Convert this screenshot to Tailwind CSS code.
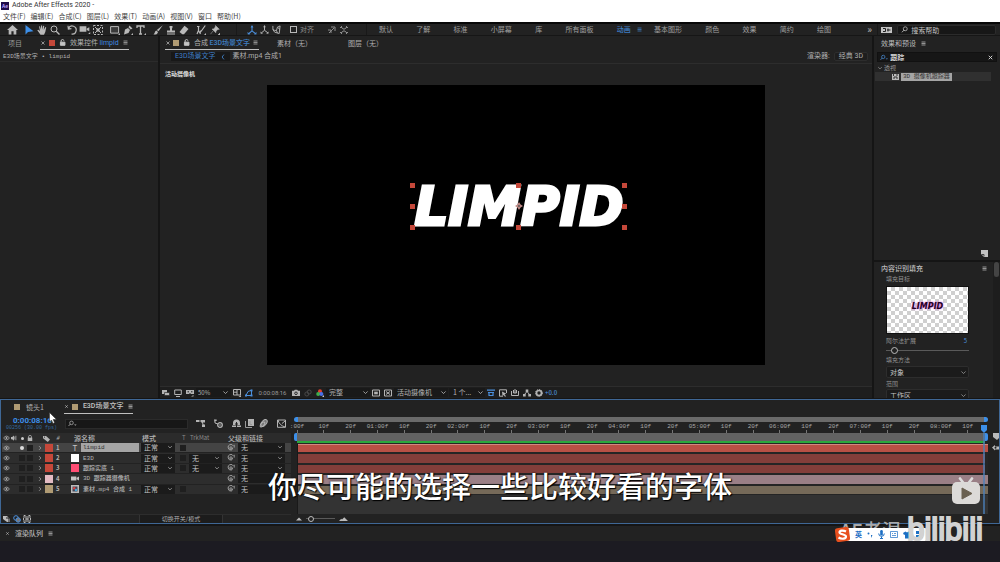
<!DOCTYPE html>
<html lang="zh-CN">
<head>
<meta charset="utf-8">
<title>Adobe After Effects 2020</title>
<meta name="viewport" content="width=device-width, initial-scale=1">
<script src="https://cdn.jsdelivr.net/npm/@tailwindcss/browser@4"></script>
</head>
<body class="bg-[#151515] text-[7px] leading-[9px] text-[#b0b0b0] font-['Noto_Sans_CJK_SC',sans-serif] overflow-hidden">

<svg class="hidden" aria-hidden="true">
  <defs>
    <symbol id="chev" viewBox="0 0 10 10"><path d="M2 3.5 5 6.5 8 3.5" fill="none" stroke="currentColor" stroke-width="1.2"/></symbol>
    <symbol id="right" viewBox="0 0 10 10"><path d="M3.5 2 6.5 5 3.5 8" fill="none" stroke="currentColor" stroke-width="1.2"/></symbol>
    <symbol id="x" viewBox="0 0 10 10"><path d="m2.5 2.5 5 5m0-5-5 5" fill="none" stroke="currentColor" stroke-width="1.3"/></symbol>
    <symbol id="menu" viewBox="0 0 10 10"><path d="M1 2h8M1 5h8M1 8h8" fill="none" stroke="currentColor" stroke-width="1.5"/></symbol>
    <symbol id="lock" viewBox="0 0 10 10"><path d="M2 4.5h6.5V9H2zM3 4.5V3a2 2 0 0 1 4-.5" fill="none" stroke="currentColor" stroke-width="1.4"/><path d="M2 4.5h6.5V9H2z" fill="currentColor"/></symbol>
    <symbol id="mag" viewBox="0 0 14 10"><circle cx="5.5" cy="4" r="2.8" fill="none" stroke="currentColor" stroke-width="1.2"/><path d="M3.5 6 .8 9" stroke="currentColor" stroke-width="1.3"/><path d="M9.5 6.5h4l-2 2z" fill="currentColor"/></symbol>
    <symbol id="eye" viewBox="0 0 12 10"><path d="M1 5q5-6.500 10 0-5 6.500-10 0z" fill="none" stroke="currentColor" stroke-width="1.300"/><circle cx="6" cy="4.800" r="1.700" fill="currentColor"/></symbol>
    <symbol id="spiral" viewBox="0 0 10 10"><path d="M6.500 5a1.500 1.500 0 1 1-1.500-1.500c2 0 2.500 3.500.5 4A3.500 3.500 0 1 1 8 2.500M9 1v3.500" fill="none" stroke="currentColor" stroke-width="1"/></symbol>
    <symbol id="cam" viewBox="0 0 12 10"><path d="M0 2h8v6H0zM8.500 4 12 2v6L8.500 6z" fill="currentColor"/></symbol>
    <symbol id="axis" viewBox="0 0 12 12"><path d="M6 1.500V7L2 10.500M6 7l4.500 3.500" fill="none" stroke="currentColor" stroke-width="1.300"/><path d="M4.300 3 6 0l1.700 3zM.5 8.500 1 11.500l3-.3zM11.500 8.500l-.3 3-3-.3z" fill="currentColor"/></symbol>
  </defs>
</svg>

<div class="flex min-h-screen flex-col">

  <header class="bg-white text-[#333]">
    <div class="flex h-[11px] items-center gap-[3px] pl-px">
      <span class="flex size-2 items-center justify-center bg-[#1d0a4a] text-[5px] leading-none font-bold text-[#b9a0ff]">Ae</span>
      <h1 class="text-[7px] font-['Roboto',sans-serif]">Adobe After Effects 2020 -</h1>
    </div>
    <nav class="flex h-[11px] items-center gap-[5px] pl-[3px] text-[7px] text-[#444]">
      <button>文件(F)</button><button>编辑(E)</button><button>合成(C)</button><button>图层(L)</button><button>效果(T)</button><button>动画(A)</button><button>视图(V)</button><button>窗口</button><button>帮助(H)</button>
    </nav>
  </header>

  <!-- tools and workspaces -->
  <div class="flex h-[14px] items-center border-t-2 border-b border-t-[#080808] border-b-[#161616] bg-[#222] text-[#b9b9b9]">
    <div class="flex w-[22px] justify-end pr-1"><button aria-label="主页"><svg class="h-[10px] w-[11px]" viewBox="0 0 12 11"><path d="M6 0 0 5.500h1.800V10.500h3V7h2.400v3.500h3V5.500H12z" fill="currentColor"/></svg></button></div>
    <div class="flex items-center gap-1">
      <div class="flex *:flex *:w-[13px] *:justify-center">
        <button aria-label="选取" class="text-[#3d8fe8]"><svg class="size-[10px]" viewBox="0 0 10 10"><path d="M1.500 0v9.500L4 7l5.500-.8z" fill="currentColor"/></svg></button>
        <button aria-label="手形"><svg class="size-[10px]" viewBox="0 0 10 10"><path d="M3.500 9.800 .3 5.300l1-.6L3 6 2 1.600l1-.3L4 4.500V.4h1.100v4L6.200.8l1 .2L6.800 5l1.500-3 .9.500L8.300 7 7 9.800z" fill="currentColor"/></svg></button>
        <button aria-label="缩放"><svg class="size-[10px]" viewBox="0 0 10 10"><circle cx="4" cy="4" r="3" fill="none" stroke="currentColor"/><path d="m6.200 6.200 3.300 3.300" stroke="currentColor" stroke-width="1.300"/></svg></button>
      </div>
      <div class="flex *:flex *:w-[13px] *:justify-center">
        <button aria-label="旋转"><svg class="size-[10px]" viewBox="0 0 10 10"><path d="M1.500 3.500a4 4 0 1 1 3 5.500M1 .8l.4 3.200 3-.3" fill="none" stroke="currentColor" stroke-width="1.200"/></svg></button>
        <button aria-label="摄像机"><svg class="h-[9px] w-[12px]" viewBox="0 0 12 10"><path d="M0 1.500h7.500v6H0zM8 4l2.800-1.600v4.500L8 5.500zM9.500 10h2.300V7.700z" fill="currentColor"/></svg></button>
        <button aria-label="锚点"><svg class="size-[10px]" viewBox="0 0 10 10"><path d="M.5.5h9v9h-9z" fill="none" stroke="currentColor" stroke-dasharray="2 1.500"/><path d="m2 2 6 6M8 2 2 8" stroke="currentColor"/><circle cx="5" cy="5" r="1.700" fill="currentColor"/></svg></button>
      </div>
      <div class="flex *:flex *:w-[13px] *:justify-center">
        <button aria-label="矩形"><svg class="size-[10px]" viewBox="0 0 10 10"><path d="M.6 1.600h8v6.500h-8z" fill="#3a3a3a" stroke="currentColor"/><path d="M8 10h2V8z" fill="currentColor"/></svg></button>
        <button aria-label="钢笔"><svg class="size-[10px]" viewBox="0 0 10 10"><path d="M1 9.500 2 4.500 5 3l2 2-1.500 3zM5.500 2.300 6.500.5 9.500 3.500 7.700 4.500zM8 10h2V8z" fill="currentColor"/></svg></button>
        <button aria-label="文字"><svg class="size-[10px]" viewBox="0 0 10 10"><path d="M1 3V1h7v2M4.500 1v8M3 9h3" fill="none" stroke="currentColor" stroke-width="1.300"/><path d="M8 10h2V8z" fill="currentColor"/></svg></button>
      </div>
      <div class="flex *:flex *:w-[13px] *:justify-center">
        <button aria-label="画笔"><svg class="size-[10px]" viewBox="0 0 10 10"><path d="M9.800.2 5.500 6.300 3.800 4.900zM3.300 5.400l1.700 1.500C4.500 9.500 2 9.800.5 9.500 2 8.500 1.500 6 3.300 5.400z" fill="currentColor"/></svg></button>
        <button aria-label="图章"><svg class="size-[10px]" viewBox="0 0 10 10"><path d="M3.500 1h3v1.500L6 3.500v2h3v2H1v-2h3v-2l-.5-1zM1 8.500h8v1H1z" fill="currentColor"/></svg></button>
        <button aria-label="橡皮擦"><svg class="size-[10px]" viewBox="0 0 10 10"><path d="M5.500.7 9.500 4 5 9.300H3.300L.5 7z" fill="currentColor"/></svg></button>
      </div>
      <div class="flex *:flex *:w-[14px] *:justify-center">
        <button aria-label="Roto 笔刷"><svg class="size-[10px]" viewBox="0 0 10 10"><path d="M1 1.500h2.500M2.500 1v4.500L1 9M2.500 5.500 4.500 9M9.300.5 5 6.500M5 5.500 4 8" fill="none" stroke="currentColor" stroke-width="1.200"/><path d="M8 10h2V8z" fill="currentColor"/></svg></button>
        <button aria-label="人偶图钉"><svg class="size-[10px]" viewBox="0 0 10 10"><path d="m5.500.5 3.800 3.800-1.500.2L6 6.200l-.2 1.600L2 4l1.700-.1L5.300 2zM3.200 5.800.5 9.200M8 10h2V8z" fill="currentColor" stroke="currentColor" stroke-width=".5"/></svg></button>
      </div>
    </div>
    <div class="ml-[14px] flex h-full items-center border-l border-[#191919] pl-[9px] *:flex *:w-3 *:justify-center">
      <button aria-label="本地轴" class="text-[#4b8fdc]"><svg class="size-[10px]"><use href="#axis"/></svg></button>
      <button aria-label="世界轴"><svg class="size-[9px]"><use href="#axis"/></svg></button>
      <button aria-label="视图轴"><svg class="size-[9px]" viewBox="0 0 10 10"><path d="M1 1v4l2 3 5 1.500L9 1 6 2.500 5 6H3L1 5M5 6l1 3M6 2.500 9 5" fill="none" stroke="currentColor"/></svg></button>
    </div>
    <label class="ml-2 flex items-center gap-[3px] text-[#8d8d8d]"><input type="checkbox" class="size-[7px] appearance-none border border-[#b9b9b9]">对齐</label>
    <div class="ml-[14px] flex gap-1 text-[#8d8d8d]">
      <button aria-label="对齐边缘"><svg class="size-2" viewBox="0 0 8 8"><path d="m1 7 5-5M3 1h4v4M0 4h3v3" fill="none" stroke="currentColor"/></svg></button>
      <button aria-label="对齐角"><svg class="size-2" viewBox="0 0 8 8"><path d="M0 1.500h2L3 3H5L6 1.500h2M0 6.500h2L3 5H5l1 1.500h2M1.500 0v2M6.500 0v2M1.500 6v2M6.500 6v2" fill="none" stroke="currentColor"/></svg></button>
    </div>
    <nav class="ml-[18px] flex h-full flex-1 items-center justify-between border-l border-[#191919] pl-3 text-[#a0a0a0]">
      <button>默认</button><button>了解</button><button>标准</button><button>小屏幕</button><button>库</button><button>所有面板</button>
      <button class="-mr-[11px] flex items-center gap-[6px] font-medium text-[#3f7fc4]">动画<svg class="size-[5px]"><use href="#menu"/></svg></button>
      <button>基本图形</button><button>颜色</button><button>效果</button><button>简约</button><button>绘图</button>
    </nav>
    <button aria-label="更多工作区" class="ml-9 pb-[2px] text-[10px] leading-[8px]">»</button>
    <div class="ml-[5px] flex h-full w-[123px] items-center gap-[5px] border-l border-[#191919] pr-1 pl-[3px]">
      <button aria-label="参考面板"><svg class="h-[6px] w-[11px]" viewBox="0 0 11 6"><path d="M0 0h11v6H0z" fill="#c4c4c4"/><path d="M2 1.500h2.500v3H2M6 3h3.500M7 1.500v3" fill="none" stroke="#222"/></svg></button>
      <label class="flex h-[10px] flex-1 items-center gap-[3px] rounded-xs border border-[#2b2b2b] bg-[#171717] pl-[3px]">
        <svg class="h-[7px] w-2" viewBox="0 0 9 10"><circle cx="5.500" cy="4" r="2.800" fill="none" stroke="currentColor" stroke-width="1.200"/><path d="M3.500 6 .8 9" stroke="currentColor" stroke-width="1.300"/></svg>
        <input type="text" aria-label="搜索帮助" placeholder="搜索帮助" class="w-full min-w-0 bg-transparent text-[7px] leading-[8px] outline-none placeholder:text-[#c4c4c4]">
      </label>
    </div>
  </div>

  <main class="flex flex-1 gap-[2px] pb-px">

    <!-- effect controls -->
    <section class="w-[158px] bg-[#222]">
      <div class="flex h-[14px]">
        <button class="pl-2 pr-[18px] text-[#9a9a9a]">项目</button>
        <div class="flex items-center border-b border-[#c0c0c0] pr-px">
          <button aria-label="关闭"><svg class="size-[6px]"><use href="#x"/></svg></button>
          <span class="ml-[3px] size-[6px] bg-[#c5483a]"></span>
          <svg class="ml-1 size-[7px] text-[#c4c4c4]"><use href="#lock"/></svg>
          <span class="ml-1">效果控件 <span class="text-[#3f8be0] font-['Roboto',sans-serif]">limpid</span></span>
          <button aria-label="菜单" class="ml-1"><svg class="size-[5px]"><use href="#menu"/></svg></button>
        </div>
      </div>
      <p class="border-b border-[#2b2b2b] pt-[2px] pl-[3px] text-[6px] font-['Liberation_Mono','Noto_Sans_CJK_SC',monospace]">E3D场景文字 • limpid</p>
    </section>

    <!-- composition viewer -->
    <section class="flex min-w-0 flex-1 flex-col bg-[#222]">
      <div class="flex h-[14px] pl-[5px]">
        <div class="flex items-center border-b border-[#c0c0c0] pr-px">
          <button aria-label="关闭"><svg class="size-[6px]"><use href="#x"/></svg></button>
          <span class="ml-[2px] size-[6px] bg-[#b09b74]"></span>
          <svg class="ml-1 size-[7px] text-[#c4c4c4]"><use href="#lock"/></svg>
          <span class="ml-1">合成 <span class="font-medium text-[#3f7fc4] font-['Roboto','Noto_Sans_CJK_SC',sans-serif]">E3D场景文字</span></span>
          <button aria-label="菜单" class="ml-[3px]"><svg class="size-[5px]"><use href="#menu"/></svg></button>
        </div>
        <button class="ml-[18px]">素材（无）</button>
        <button class="ml-9">图层（无）</button>
      </div>
      <div class="flex h-[14px] items-center border-b border-[#2d2d2d] px-1 font-['Roboto','Noto_Sans_CJK_SC',sans-serif]">
        <button class="ml-[7px] flex h-[9px] items-center gap-1 bg-[#181818] px-1 text-[#3f7fc4]">E3D场景文字<svg class="size-[6px]" viewBox="0 0 10 10"><path d="M6.500 1 3.500 5l3 4" fill="none" stroke="currentColor" stroke-width="1.500"/></svg></button>
        <button class="ml-[3px]">素材.mp4 合成1</button>
        <span class="ml-auto">渲染器:</span>
        <button class="ml-1 h-[9px] rounded-xs border border-[#2d2d2d] bg-[#1e1e1e] px-1 leading-[7px]">经典 3D</button>
      </div>

      <div class="relative flex flex-1 items-center justify-center">
        <span class="absolute top-[5px] left-[5px] text-[6px] font-black text-[#d0d0d0]">活动摄像机</span>
        <div class="flex aspect-video w-[70%] items-center justify-center bg-black pb-[38px] pl-[6px]">
          <div class="relative flex h-[43px] w-[213px] items-center justify-center">
            <span class="pt-px text-[53px] leading-none font-bold whitespace-nowrap text-white italic [-webkit-text-stroke:3px_#fff] font-['DejaVu_Sans',sans-serif]">LIMPID</span>
            <div class="absolute -inset-[2px] grid grid-cols-3 content-between justify-items-center *:size-[5px] *:bg-[#c5483a]">
              <i class="justify-self-start"></i><i></i><i class="justify-self-end"></i>
              <i class="my-[16px] justify-self-start"></i><svg class="my-[14px] size-2! bg-transparent!" viewBox="0 0 10 10"><path d="M5 0 7 3l3 2-3 2-2 3-2-3-3-2 3-2z" fill="#c08a86"/><circle cx="5" cy="5" r="1.200" fill="#555"/></svg><i class="my-[16px] justify-self-end"></i>
              <i class="justify-self-start"></i><i></i><i class="justify-self-end"></i>
            </div>
          </div>
        </div>
      </div>

      <div class="flex h-[12px] items-center border-t border-[#2d2d2d] bg-[#1e1e1e] text-[#b4b4b4]">
        <div class="flex *:flex *:w-3 *:justify-center">
          <button aria-label="始终预览"><svg class="size-2" viewBox="0 0 8 8"><path d="M0 1h5v4H0z" fill="currentColor"/><path d="M2.500 3.500h5v3h-5z" fill="currentColor" stroke="#1e1e1e" stroke-width=".6"/></svg></button>
          <button aria-label="主查看器"><svg class="size-2" viewBox="0 0 8 8"><path d="M.7 1h6.600v4.500H.7zM2 7.500h4" fill="none" stroke="currentColor"/></svg></button>
          <button aria-label="VR"><svg class="size-2" viewBox="0 0 8 8"><path d="M0 1h8v4H5L4 4 3 5H0zM5 7.500h2.500V6z" fill="currentColor"/><path d="M1.500 2.800h1.500M5 2.800h1.500" stroke="#1e1e1e"/></svg></button>
        </div>
        <div class="relative w-[35px]"><select aria-label="放大率" class="block h-[9px] w-full appearance-none bg-[#191919] pl-[2px] text-[6px] leading-[9px]"><option>50%</option></select><svg class="pointer-events-none absolute top-[1px] right-[2px] size-[7px]"><use href="#chev"/></svg></div>
        <div class="flex *:flex *:w-3 *:justify-center">
          <button aria-label="网格"><svg class="size-2" viewBox="0 0 8 8"><path d="M.5.500h7v5.500h-7zM4 .5V6M.5 3.200H4" fill="none" stroke="currentColor"/><path d="M5.500 8H8V6z" fill="currentColor"/></svg></button>
          <button aria-label="蒙版" class="text-[#4b8fdc]"><svg class="size-2" viewBox="0 0 8 8"><path d="M1 6.500h5.500V1.200L3 2.500z" fill="none" stroke="currentColor"/><path d="M0 5.500h2v2H0zM5.500 5.500h2v2h-2zM5.500.5h2v2h-2z" fill="currentColor"/></svg></button>
        </div>
        <button class="w-[35px] text-center text-[6px] text-[#9a9a9a] font-['Roboto',sans-serif]">0:00:08:16</button>
        <div class="flex *:flex *:w-3 *:justify-center">
          <button aria-label="拍摄快照"><svg class="size-2" viewBox="0 0 8 8"><path d="M0 1.800h2L2.800.8h2.400l.8 1h2V7H0z" fill="currentColor"/><circle cx="4" cy="4.300" r="1.300" fill="none" stroke="#1e1e1e" stroke-width=".9"/></svg></button>
          <button aria-label="显示快照" class="text-[#484848]"><svg class="size-2" viewBox="0 0 8 8"><circle cx="2.800" cy="5" r="2" fill="none" stroke="currentColor"/><circle cx="5.200" cy="3" r="2" fill="none" stroke="currentColor"/></svg></button>
          <button aria-label="通道"><svg class="size-2" viewBox="0 0 8 8"><circle cx="4" cy="2.200" r="2" fill="#e0402e"/><circle cx="2.200" cy="5" r="2" fill="#3fae48"/><circle cx="5.400" cy="5" r="2" fill="#4a6fe8"/><path d="M6 8h2V6z" fill="#ccc"/></svg></button>
        </div>
        <div class="relative w-[44px]"><select aria-label="分辨率" class="block h-[9px] w-full appearance-none bg-[#191919] pl-[3px] text-[7px] leading-[9px]"><option>完整</option></select><svg class="pointer-events-none absolute top-[1px] right-[1px] size-[7px]"><use href="#chev"/></svg></div>
        <div class="flex *:flex *:w-3 *:justify-center">
          <button aria-label="目标区域"><svg class="size-2" viewBox="0 0 8 8"><path d="M.5 1h7v6h-7z" fill="none" stroke="currentColor"/><path d="M2.200 2.700h3.600v2.600H2.200z" fill="currentColor"/></svg></button>
          <button aria-label="透明网格"><svg class="size-2" viewBox="0 0 8 8"><path d="M.5 1h7v6h-7zM2 2.500l4 3M6 2.500l-4 3" fill="none" stroke="currentColor"/></svg></button>
        </div>
        <div class="relative w-[54px]"><select aria-label="3D 视图" class="block h-[9px] w-full appearance-none bg-[#191919] pl-[3px] text-[7px] leading-[9px]"><option>活动摄像机</option></select><svg class="pointer-events-none absolute top-[1px] right-[1px] size-[7px]"><use href="#chev"/></svg></div>
        <div class="relative ml-px w-9"><select aria-label="视图布局" class="block h-[9px] w-full appearance-none bg-[#191919] pl-1 text-[7px] leading-[9px]"><option>1 个...</option></select><svg class="pointer-events-none absolute top-[1px] right-[1px] size-[7px]"><use href="#chev"/></svg></div>
        <div class="flex *:flex *:w-3 *:justify-center">
          <button aria-label="像素长宽比" class="text-[#4b8fdc]"><svg class="size-2" viewBox="0 0 8 8"><path d="M0 1.200h8M1 3.500h6M2 3.500v3h4v-3" fill="none" stroke="currentColor" stroke-width="1.200"/></svg></button>
          <button aria-label="快速预览"><svg class="size-2" viewBox="0 0 8 8"><path d="M7.500 4V.8h-7v6.400H4" fill="none" stroke="currentColor"/><path d="m3 2.500 4.500 2.200-2 .5 1.500 2-1 .6L4.700 6 3.500 7z" fill="currentColor"/></svg></button>
          <button aria-label="时间轴"><svg class="size-2" viewBox="0 0 8 8"><path d="M.5 2v4.500h7V2M4 0v4M2.500 1v3h3V1" fill="none" stroke="currentColor"/></svg></button>
          <button aria-label="流程图"><svg class="size-2" viewBox="0 0 8 8"><path d="M2.700.500h2.600V3H2.700zM0 5h2.700v2.500H0zM5.300 5H8v2.500H5.300z" fill="currentColor"/><path d="m4 2.500-2.500 3M4 2.500l2.500 3" stroke="currentColor"/></svg></button>
          <button aria-label="曝光度"><svg class="size-2" viewBox="0 0 8 8"><circle cx="4" cy="4" r="2.500" fill="none" stroke="currentColor" stroke-width="1.600"/><circle cx="4" cy="4" r="3.500" fill="none" stroke="currentColor" stroke-dasharray="1.300 1"/></svg></button>
        </div>
        <button class="text-[6px] font-medium text-[#4b8fdc]">+0.0</button>
      </div>
    </section>

    <!-- effects and fill panels -->
    <aside class="flex w-[126px] flex-col gap-[2px]">
      <section class="flex flex-1 flex-col bg-[#222]">
        <h2 class="flex h-[14px] items-center gap-[5px] pl-[7px] text-[#bbb]">效果和预设 <svg class="size-[5px]"><use href="#menu"/></svg></h2>
        <label class="mx-[3px] mt-[2px] flex h-[10px] items-center gap-[2px] border border-[#111] bg-[#161616] px-[2px]">
          <svg class="h-[7px] w-[10px] text-[#4b8fdc]"><use href="#mag"/></svg>
          <input type="text" aria-label="搜索效果" value="跟踪" class="w-full min-w-0 bg-transparent text-[7px] leading-[8px] font-bold text-[#d0d0d0] outline-none">
          <button aria-label="清除" class="text-[#ddd]"><svg class="size-[7px]"><use href="#x"/></svg></button>
        </label>
        <ul class="pt-px pr-[9px] pl-px text-[6px] text-[#9a9a9a]">
          <li class="flex h-[9px] items-center gap-px pl-[2px]"><svg class="size-[6px]"><use href="#chev"/></svg>透视</li>
          <li class="flex h-[9px] items-center gap-[2px] bg-[#303030] pl-[17px]">
            <svg class="h-2 w-[7px]" viewBox="0 0 7 8"><path d="M0 1h7v6H0z" fill="#bbb"/><path d="M1.500 0v3M5 0v3M2 6V4h3v2" fill="none" stroke="#333"/></svg>
            <span class="h-2 bg-[#a5a5a5] px-[2px] leading-[8px] text-[#333] font-['Liberation_Mono','Noto_Sans_CJK_SC',monospace]">3D 摄像机跟踪器</span>
          </li>
        </ul>
        <button aria-label="新建" class="mt-auto mr-[12px] mb-[3px] self-end"><svg class="size-[7px]" viewBox="0 0 7 7"><path d="M0 0h7v7H3L0 4z" fill="#c4c4c4"/><path d="M.5 4.500H3V6.500" stroke="#444" fill="none"/></svg></button>
      </section>
      <section class="flex h-[136px] overflow-hidden bg-[#222]">
        <div class="min-w-0 flex-1">
          <h2 class="flex h-[13px] items-center justify-between pr-[6px] pl-[7px] font-medium text-[#bbb]">内容识别填充 <svg class="size-[5px]"><use href="#menu"/></svg></h2>
          <div class="pr-[24px] pl-3 text-[6px] leading-[8px] text-[#929292]">
            <p>填充目标</p>
            <div class="mt-[3px] flex h-[48px] items-center justify-center border border-[#111] bg-[repeating-conic-gradient(#cfcfcf_0_25%,#fff_0_50%)] bg-[length:8px_8px] pb-[6px] text-[8px] font-bold text-[#230624] italic text-shadow-[0_0_2px_#e040e0] font-['DejaVu_Sans',sans-serif]"><span>LIMPID</span></div>
            <div class="mt-[3px] flex justify-between pr-[2px]"><label for="alpha">阿尔法扩展</label><span class="text-[#4b8fdc]">5</span></div>
            <input id="alpha" type="range" min="0" max="100" value="7" class="mt-px block h-2 w-full appearance-none bg-transparent bg-[linear-gradient(#5a5a5a,#5a5a5a)] bg-[length:100%_1px] bg-center bg-no-repeat [&::-webkit-slider-thumb]:size-[7px] [&::-webkit-slider-thumb]:appearance-none [&::-webkit-slider-thumb]:rounded-full [&::-webkit-slider-thumb]:border [&::-webkit-slider-thumb]:border-[#bbb] [&::-webkit-slider-thumb]:bg-[#222]">
            <label for="method" class="mt-[2px] block">填充方法</label>
            <div class="relative mt-[2px]"><select id="method" class="block h-3 w-full appearance-none rounded-xs border border-[#2d2d2d] bg-[#1b1b1b] pl-[3px] text-[7px] leading-[10px] text-[#c4c4c4]"><option>对象</option></select><svg class="pointer-events-none absolute top-[3px] right-[2px] size-[7px]"><use href="#chev"/></svg></div>
            <label for="range" class="mt-[2px] block">范围</label>
            <div class="relative mt-px"><select id="range" class="block h-3 w-full appearance-none rounded-xs border border-[#2d2d2d] bg-[#1b1b1b] pl-[3px] text-[7px] leading-[10px] text-[#c4c4c4]"><option>工作区</option></select><svg class="pointer-events-none absolute top-[3px] right-[2px] size-[7px]"><use href="#chev"/></svg></div>
          </div>
        </div>
        <div class="w-[7px] bg-[#1d1d1d] px-px"><div class="h-[15px] rounded-full bg-[#444]"></div></div>
      </section>
    </aside>
  </main>

  <!-- timeline -->
  <section class="relative flex h-[125px] border border-[#3f6795] bg-[#222]">
    <div class="flex w-[290px] flex-col pl-px">
      <div class="flex h-[14px] items-start">
        <button class="flex h-[14px] items-center gap-[6px] pl-3"><i class="size-[6px] bg-[#b09b74]"></i>镜头1</button>
        <div class="ml-5 flex h-[14px] items-center border-b border-[#c0c0c0] text-[#c4c4c4]">
          <button aria-label="关闭"><svg class="size-[5px]"><use href="#x"/></svg></button>
          <i class="ml-[3px] size-[6px] bg-[#b09b74]"></i>
          <span class="ml-[5px] font-medium font-['Roboto','Noto_Sans_CJK_SC',sans-serif]">E3D场景文字</span>
          <button aria-label="菜单" class="ml-[5px]"><svg class="size-[5px]"><use href="#menu"/></svg></button>
        </div>
      </div>
      <div class="flex h-[19px] items-center">
        <div class="w-[63px] pl-1 leading-none">
          <button class="block pl-[7px] text-[8px] leading-[9px] font-bold text-[#3d8fe8] font-['Roboto',sans-serif]">0:00:08:16</button>
          <span class="block text-[5px] leading-[6px] whitespace-nowrap text-[#34689f] font-['Liberation_Mono',monospace]">00256 (30.00 fps)</span>
        </div>
        <label class="flex h-[10px] w-[123px] items-center gap-1 border border-[#2b2b2b] bg-[#171717] pl-[2px]"><svg class="h-[7px] w-[10px]"><use href="#mag"/></svg><input type="text" aria-label="搜索图层" class="w-full min-w-0 bg-transparent text-[7px] outline-none"></label>
        <div class="ml-2 flex flex-1 justify-between pr-[5px] text-[#b4b4b4]">
          <button aria-label="合成微型流程图"><svg class="size-[9px]" viewBox="0 0 9 9"><path d="M0 1h3v2H0zM5 1h4v2.500H5zM6 5.500h3V8H6z" fill="currentColor"/><path d="M2 2h4l1.500 5" fill="none" stroke="currentColor"/></svg></button>
          <button aria-label="草图 3D" class="ml-2"><svg class="size-[9px]" viewBox="0 0 9 9"><path d="M1 0v4l3 1M3 1 0 2" fill="none" stroke="currentColor"/><circle cx="6" cy="6" r="2.300" fill="none" stroke="currentColor" stroke-width="1.300"/><circle cx="6" cy="6" r=".8" fill="currentColor"/></svg></button>
          <button aria-label="隐藏图层" class="ml-2"><svg class="size-[9px]" viewBox="0 0 9 9"><path d="M1 6V4a3.500 3.500 0 0 1 7 0v2zM0 6.500h9V8H0z" fill="currentColor"/><path d="M4.500 3v5M3 5h3" stroke="#222"/></svg></button>
          <button aria-label="帧混合" class="ml-1"><svg class="size-[9px]" viewBox="0 0 9 9"><path d="M3 0h6v7H3z" fill="currentColor"/><path d="M.5 2v6.500H7M5 2v3.500h2" fill="none" stroke="#999"/></svg></button>
          <button aria-label="运动模糊" class="ml-1"><svg class="size-[9px]" viewBox="0 0 9 9"><ellipse cx="5" cy="4" rx="2.300" ry="4" transform="rotate(40 5 4)" fill="#777" stroke="currentColor"/><ellipse cx="3.500" cy="5.500" rx="1.500" ry="3" transform="rotate(40 3.500 5.500)" fill="none" stroke="currentColor"/></svg></button>
          <button aria-label="图表编辑器" class="ml-2"><svg class="size-[9px]" viewBox="0 0 9 9"><path d="M.5 1h8v7.300h-8zM1 1q1 5 7 7M8 2 5 4.500" fill="none" stroke="currentColor"/></svg></button>
        </div>
      </div>

      <table class="h-[62px] w-full table-fixed border-collapse text-left text-[6px] leading-[8px] text-[#b4b4b4] [&_td]:p-0 [&_th]:p-0">
        <colgroup>
          <col class="w-[9px]"><col class="w-[7px]"><col class="w-[8px]"><col class="w-[8px]"><col class="w-[9px]"><col class="w-[11px]"><col class="w-[15px]"><col class="w-[12px]"><col class="w-[58px]"><col class="w-[38px]"><col class="w-[12px]"><col class="w-[35px]"><col class="w-[14px]"><col class="w-[49px]"><col>
        </colgroup>
        <thead>
          <tr class="h-[10px] bg-[#2b2b2b] text-[7px]">
            <th aria-label="可见"><svg class="mx-auto h-[6px] w-[7px]"><use href="#eye"/></svg></th>
            <th aria-label="音频"><svg class="size-[6px]" viewBox="0 0 8 8"><path d="M0 2.500h1.500L4 .5v7L1.500 5.500H0z" fill="currentColor"/><path d="M5 2v4M6.500 1v6" stroke="currentColor"/></svg></th>
            <th aria-label="独奏"><i class="mx-auto block size-[3px] rounded-full bg-[#ccc]"></i></th>
            <th aria-label="锁定"><svg class="mx-auto size-[6px]" viewBox="0 0 8 8"><path d="M1 3.500h6V8H1z" fill="currentColor"/><path d="M2 4V2.500a2 2 0 0 1 4 0V4" fill="none" stroke="currentColor"/></svg></th>
            <th></th>
            <th aria-label="标签"><svg class="size-[7px]" viewBox="0 0 8 8"><path d="M0 1h3.500L8 5 5.500 8 0 3.800z" fill="currentColor"/><circle cx="1.700" cy="2.400" r=".6" fill="#222"/></svg></th>
            <th class="text-[6px]! font-normal"><span class="pl-[2px] italic">#</span></th>
            <th colspan="2" class="pl-[5px]! font-medium">源名称</th>
            <th class="pl-[3px]! font-medium">模式</th>
            <th class="pl-[5px]! text-[6px] font-normal text-[#8a8a8a]">T</th>
            <th class="pl-px! text-[6px] font-normal text-[#8a8a8a]">TrkMat</th>
            <th colspan="2" class="pl-1! font-medium">父级和链接</th><th></th>
          </tr>
        </thead>
        <tbody id="layers"></tbody>
      </table>

      <div class="mt-auto flex h-[9px] items-center border-t border-[#2d2d2d]">
        <div class="flex w-[137px] gap-[2px] pl-px">
          <button aria-label="图层开关"><svg class="size-2" viewBox="0 0 8 8"><path d="M0 1h4l3 3v3H4L0 4z" fill="#bbb"/><path d="M3 3h3v4" stroke="#222" fill="none"/></svg></button>
          <button aria-label="转换控制" class="text-[#4b8fdc]"><svg class="size-2" viewBox="0 0 8 8"><circle cx="3" cy="3" r="2.300" fill="none" stroke="currentColor"/><circle cx="5.200" cy="5" r="2.200" fill="#777" stroke="currentColor"/></svg></button>
          <button aria-label="入点出点"><svg class="size-2" viewBox="0 0 8 8"><path d="M2.500.5H1v2L.2 4l.8 1.500v2h1.500M5.500.5H7v2L7.800 4 7 5.500v2H5.500M3 1v6M5 1v6M3 4h2" fill="none" stroke="#bbb"/></svg></button>
        </div>
        <button class="h-2 w-[84px] border-x border-[#333] bg-[#1c1c1c] text-[6px] leading-[8px]">切换开关/模式</button>
      </div>
    </div>

    <div class="flex min-w-0 flex-1 flex-col">
      <div class="relative flex flex-1 flex-col pt-[17px] pr-3 pl-[6px]">
        <div class="-mr-px -ml-[3px] h-[5px] rounded-full border-x-4 border-[#3d8fe8] bg-[#6a6a6a]"></div>
        <div id="ruler" class="flex h-[11px] justify-between overflow-visible pt-px pr-[19px] text-[6px] leading-[7px] text-[#a9a9a9] font-['Liberation_Mono',monospace]"></div>
        <div class="-mr-px -ml-[3px] h-2 rounded-xs border-x-3 border-[#3d8fe8] bg-[#626262]"></div>
        <div class="mr-[2px] h-[2px] bg-[#28a83c]"></div>
        <div class="-mr-px flex flex-1 flex-col border-l border-[#191919] bg-[#333]">
          <div class="grid h-[52px] grid-rows-5 bg-[#252525] *:mt-px *:mb-px">
            <div class="border-t border-[#d08a80] bg-[#b85045]"></div>
            <div class="mr-[3px] bg-[#833e3a]"></div>
            <div class="mr-[3px] bg-[#833e3a]"></div>
            <div class="bg-[#9a7f86]"></div>
            <div class="bg-[#766a59]"></div>
          </div>
        </div>
        <div class="absolute right-[11px] bottom-0 flex w-2 flex-col items-center" style="top:25px">
          <svg class="h-2 w-2" viewBox="0 0 8 8"><path d="M1 0h6v5L4 8 1 5z" fill="#3d8fe8"/></svg>
          <i class="w-[2px] flex-1 bg-[#4a80ba]/70"></i>
        </div>
        <div class="absolute right-0 flex flex-col gap-1 text-[#bbb]" style="top:33px">
          <svg class="size-[7px]" viewBox="0 0 7 7"><path d="M1 0h6v5L5 7 1 4z" fill="currentColor"/></svg>
          <svg class="size-[7px]" viewBox="0 0 7 7"><path d="M0 3.500 3 1v1.500h4v3H3V6.500z" fill="currentColor"/><circle cx="3.500" cy="3.700" r="1" fill="#222"/></svg>
        </div>
      </div>
      <div class="flex h-[9px] items-center gap-1 pl-[5px] text-[#bbb]">
        <svg class="h-1 w-[6px]" viewBox="0 0 8 4"><path d="M0 4 4 0l4 4z" fill="currentColor"/></svg>
        <input type="range" aria-label="时间缩放" min="0" max="100" value="10" class="block h-2 w-[29px] appearance-none bg-transparent bg-[linear-gradient(#5a5a5a,#5a5a5a)] bg-[length:100%_1px] bg-center bg-no-repeat [&::-webkit-slider-thumb]:size-[6px] [&::-webkit-slider-thumb]:appearance-none [&::-webkit-slider-thumb]:rounded-full [&::-webkit-slider-thumb]:border [&::-webkit-slider-thumb]:border-[#bbb] [&::-webkit-slider-thumb]:bg-[#222]">
        <svg class="h-1 w-[9px]" viewBox="0 0 12 5"><path d="M0 5 3 2l1 1 3-3 5 5z" fill="currentColor"/></svg>
      </div>
    </div>

    <!-- video subtitle -->
    <p class="absolute inset-x-0 top-[68px] text-center text-[29px] leading-[34px] font-medium whitespace-nowrap text-white text-shadow-[0_0_2px_#000,1px_1px_1px_#000]">你尽可能的选择一些比较好看的字体</p>
    <!-- mouse pointer -->
    <svg class="absolute top-[12px] left-[48px] h-[12px] w-[8px]" viewBox="0 0 8 12"><path d="M.5.500v9.500l2-2 1.500 3.500 1.600-.7L4.200 7.500H7.500z" fill="#fff" stroke="#222" stroke-width=".5"/></svg>
  </section>

  <footer class="relative mt-[2px] bg-[#1c1b22] pb-[21px]">
    <div class="flex h-[15px] items-center gap-[5px] bg-[#222] pl-[5px] font-medium text-[#bbb]">
      <button aria-label="关闭"><svg class="size-[5px]"><use href="#x"/></svg></button>渲染队列<svg class="size-[5px]"><use href="#menu"/></svg>
    </div>

    <!-- player watermark -->
    <svg class="absolute right-[19px] bottom-[57px] h-[28px] w-[30px]" viewBox="0 0 30 28"><path d="m9 1.500 3.500 4.500M21 1.500 17.500 6" stroke="#ddd" stroke-width="2.600" stroke-linecap="round"/><rect x="1" y="5" width="28" height="22" rx="5" fill="#dcdad8"/><path d="M11 11v11l10-5.500z" fill="#6a6050" stroke="#6a6050" stroke-linejoin="round"/></svg>
    <span class="absolute right-[99px] bottom-[22px] text-[19px] leading-[20px] font-medium whitespace-nowrap text-[#aaa]">AE老湿</span>
    <div class="absolute right-[73px] bottom-[21px] flex h-[13px] w-[88px] items-center justify-between rounded-xs bg-white pr-1 text-[#1c6fc4]">
      <svg class="-mt-px -ml-1 size-[15px]" viewBox="0 0 15 15"><rect x=".5" y=".5" width="14" height="14" rx="2.500" fill="#e8501e" transform="rotate(-8 7.500 7.500)"/><path d="M11 4.500C8 3 4.500 3.500 4.500 5.500S11 7 11 9.500s-4.500 3-7.500 1" fill="none" stroke="#fff" stroke-width="2.200"/></svg>
      <button class="font-bold">英</button>
      <button aria-label="标点"><svg class="size-[6px]" viewBox="0 0 6 6"><circle cx="1.500" cy="1.500" r="1" fill="currentColor"/><path d="M4 3h1.500L4 6z" fill="currentColor"/></svg></button>
      <button aria-label="语音"><svg class="h-[9px] w-[7px]" viewBox="0 0 7 9"><rect x="2.200" width="2.600" height="5.500" rx="1.300" fill="currentColor"/><path d="M.7 3.500a2.800 2.800 0 0 0 5.600 0M3.500 6.500V9M2 8.500h3" fill="none" stroke="currentColor"/></svg></button>
      <button aria-label="键盘"><svg class="h-[7px] w-2" viewBox="0 0 8 7"><path d="M.5.500h7v6h-7zM2 2.500h1m1 0h2M2 4.500h4" fill="none" stroke="currentColor" stroke-width=".7"/></svg></button>
      <button aria-label="皮肤"><svg class="size-2" viewBox="0 0 8 8"><path d="M2.500.5 4 1.500 5.500.5 8 2 7 4l-1-.5v4H2v-4L1 4 0 2z" fill="currentColor"/></svg></button>
      <button aria-label="工具箱"><svg class="size-[7px]" viewBox="0 0 7 7"><path d="M0 0h3v3H0zM4 0h3v3H4zM0 4h3v3H0zM4 4h3v3H4z" fill="currentColor"/></svg></button>
    </div>
    <span class="absolute right-[17px] bottom-[15px] text-[31px] leading-[34px] text-[#d2d2d2] [-webkit-text-stroke:2px_#d2d2d2] font-['Liberation_Sans',sans-serif] text-shadow-[0_0_1px_#333]">bilibili</span>
  </footer>
</div>

<script>
  const layers = [
    { color: '#c5483a', name: 'limpid', icon: '<span class="text-[8px] leading-[8px]">T</span>', mode: 1, solo: 1, selected: 1 },
    { color: '#c5483a', name: 'E3D', icon: '<i class="block size-2 bg-white"></i>', mode: 1, trk: 1 },
    { color: '#c5483a', name: '跟踪实底 1', icon: '<i class="block size-2 bg-[#ff4d74]"></i>', mode: 1, trk: 1 },
    { color: '#e4bcc4', name: '3D 跟踪器摄像机', icon: '<svg class="h-[7px] w-2"><use href="#cam"/></svg>' },
    { color: '#b09b74', name: '素材.mp4 合成 1', icon: '<svg class="size-2" viewBox="0 0 8 8"><path d="M0 0h8v8H0z" fill="#bbb"/><path d="M1.500 1.500h5v5h-5z" fill="#445"/><circle cx="3.200" cy="3.200" r="1.200" fill="#d44"/><circle cx="5" cy="5" r="1.200" fill="#4ad"/></svg>', mode: 1 },
  ];
  const drop = (label, value) =>
    `<div class="relative mr-[2px]"><select aria-label="${label}" class="block h-[9px] w-full appearance-none bg-[#1b1b1b] pl-[3px] text-[7px] leading-[9px] text-[#c4c4c4]"><option>${value}</option></select><svg class="pointer-events-none absolute top-[1px] right-[2px] size-[6px]"><use href="#chev"/></svg></div>`;
  const box = '<i class="mx-auto block size-[6px] bg-[#1f1f1f]"></i>';

  document.getElementById('layers').innerHTML = layers.map((l, i) => `
    <tr class="border-b border-[#222] ${l.selected ? 'bg-[#444]' : 'bg-[#2d2d2d]'}">
      <td><svg class="mx-auto h-[6px] w-[7px]"><use href="#eye"/></svg></td>
      <td></td>
      <td>${l.solo ? '<i class="mx-auto block size-1 rounded-full bg-[#ddd]"></i>' : box}</td>
      <td>${box}</td>
      <td><svg class="ml-auto size-[6px]"><use href="#right"/></svg></td>
      <td><i class="mx-auto block size-2" style="background:${l.color}"></i></td>
      <td class="font-bold"><span class="pl-[2px]">${i + 1}</span></td>
      <td><div class="flex justify-center text-[#c4c4c4]">${l.icon}</div></td>
      <td><span class="block h-[9px] leading-[9px] pl-[2px] whitespace-nowrap font-['Liberation_Mono','Noto_Sans_CJK_SC',monospace] ${l.selected ? 'bg-[#a5a5a5] text-[#333]' : 'font-medium'}">${l.name}</span></td>
      <td><div class="pl-[2px]">${l.mode ? drop('模式', '正常') : ''}</div></td>
      <td>${l.mode ? box : ''}</td>
      <td>${l.trk ? drop('轨道遮罩', '无') : ''}</td>
      <td><svg class="mx-auto size-2"><use href="#spiral"/></svg></td>
      <td>${drop('父级', '无')}</td>
      <td></td>
    </tr>`).join('');

  // One label for every ten frames at 30 fps
  document.getElementById('ruler').innerHTML = Array.from({ length: 26 }, (_, i) => {
    const s = Math.floor(i / 3), f = (i % 3) * 10;
    const text = f ? f + 'f' : s ? '0' + s + ':00f' : ':00f';
    return `<span class="flex w-0 flex-col items-center justify-between whitespace-nowrap">${text}<i class="h-[3px] w-px shrink-0 bg-[#777]"></i></span>`;
  }).join('');
</script>
</body>
</html>
